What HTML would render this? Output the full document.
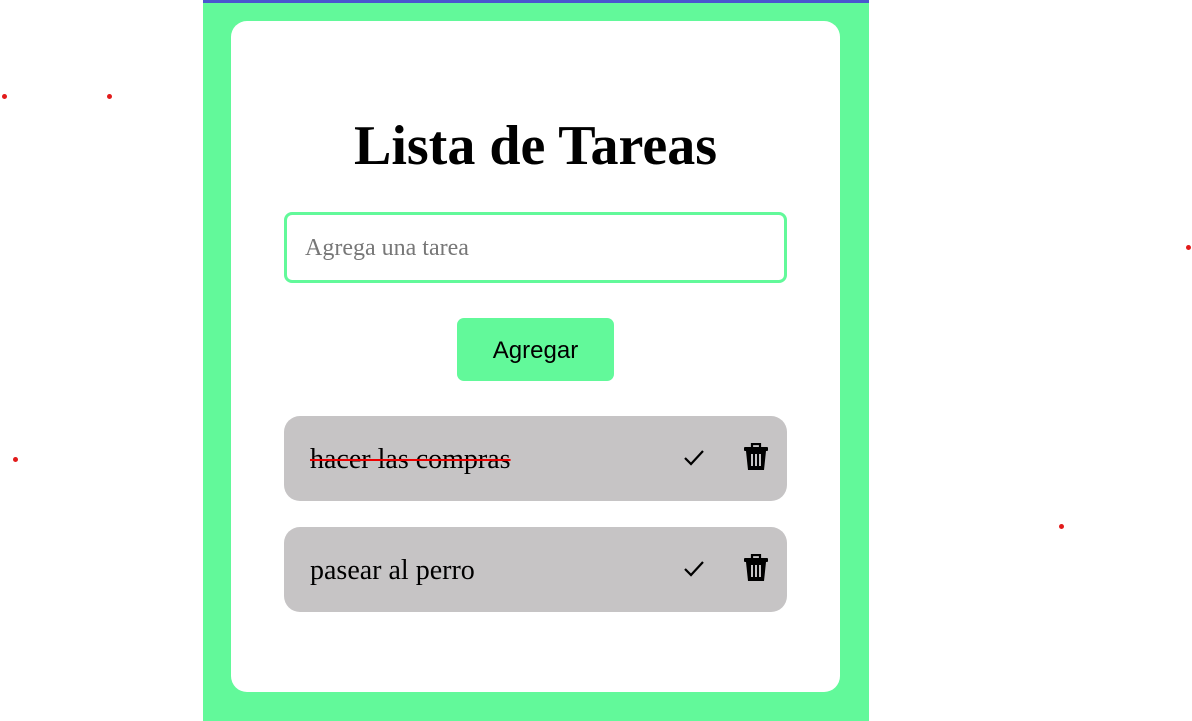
<!DOCTYPE html><html><head><style>
body{margin:0;width:1192px;height:721px;background:#fff;position:relative;overflow:hidden;font-family:"Liberation Serif",serif}
.col{position:absolute;left:203px;top:0;width:666px;height:721px;background:#62f99a;border-top:3px solid #4a55d0;box-sizing:border-box}
.card{position:absolute;left:231px;top:21px;width:609px;height:671px;background:#fff;border-radius:16px}
h1{position:absolute;left:231px;width:609px;top:114px;margin:0;text-align:center;font-size:56px;font-weight:bold;line-height:64px}
.inp{position:absolute;left:284px;top:212px;width:503px;height:71px;border:3px solid #62f99a;border-radius:8px;box-sizing:border-box;font-size:24px;color:#777;padding-left:18px;line-height:67px}
.btn{position:absolute;left:457px;top:318px;width:157px;height:63px;background:#62f99a;border-radius:7px;font-family:"Liberation Sans",sans-serif;font-size:24px;text-align:center;line-height:65px}
.it{position:absolute;left:284px;width:503px;height:85px;background:#c6c4c5;border-radius:16px;font-size:28px;line-height:87px;padding-left:26px;box-sizing:border-box}
.it svg{position:absolute}
.dot{position:absolute;width:5px;height:5px;border-radius:50%;background:#e21b1b}
</style></head><body>
<div class="col"></div><div class="card"></div>
<h1>Lista de Tareas</h1>
<div class="inp">Agrega una tarea</div>
<div class="btn">Agregar</div>
<div class="it" style="top:416px"><span style="text-decoration:line-through;text-decoration-color:#e00;text-decoration-thickness:2px">hacer las compras</span>
<svg style="left:399px;top:32px" width="22" height="20" viewBox="0 0 22 20"><path d="M2 10l6 6L20 3" fill="none" stroke="#000" stroke-width="2.2"/></svg>
<svg style="left:459px;top:27px" width="26" height="28" viewBox="0 0 26 28"><path d="M9 4V1h8v3" fill="none" stroke="#000" stroke-width="2.2"/><rect x="1" y="4" width="24" height="4" rx="1"/><path d="M3 8h20l-2 19H5z"/><path d="M9 11v12M13 11v12M17 11v12" stroke="#c6c4c5" stroke-width="2"/></svg></div>
<div class="it" style="top:527px">pasear al perro
<svg style="left:399px;top:32px" width="22" height="20" viewBox="0 0 22 20"><path d="M2 10l6 6L20 3" fill="none" stroke="#000" stroke-width="2.2"/></svg>
<svg style="left:459px;top:27px" width="26" height="28" viewBox="0 0 26 28"><path d="M9 4V1h8v3" fill="none" stroke="#000" stroke-width="2.2"/><rect x="1" y="4" width="24" height="4" rx="1"/><path d="M3 8h20l-2 19H5z"/><path d="M9 11v12M13 11v12M17 11v12" stroke="#c6c4c5" stroke-width="2"/></svg></div>
<div class="dot" style="left:2px;top:94px"></div><div class="dot" style="left:107px;top:94px"></div><div class="dot" style="left:1186px;top:245px"></div><div class="dot" style="left:13px;top:457px"></div><div class="dot" style="left:1059px;top:524px"></div>
</body></html>
